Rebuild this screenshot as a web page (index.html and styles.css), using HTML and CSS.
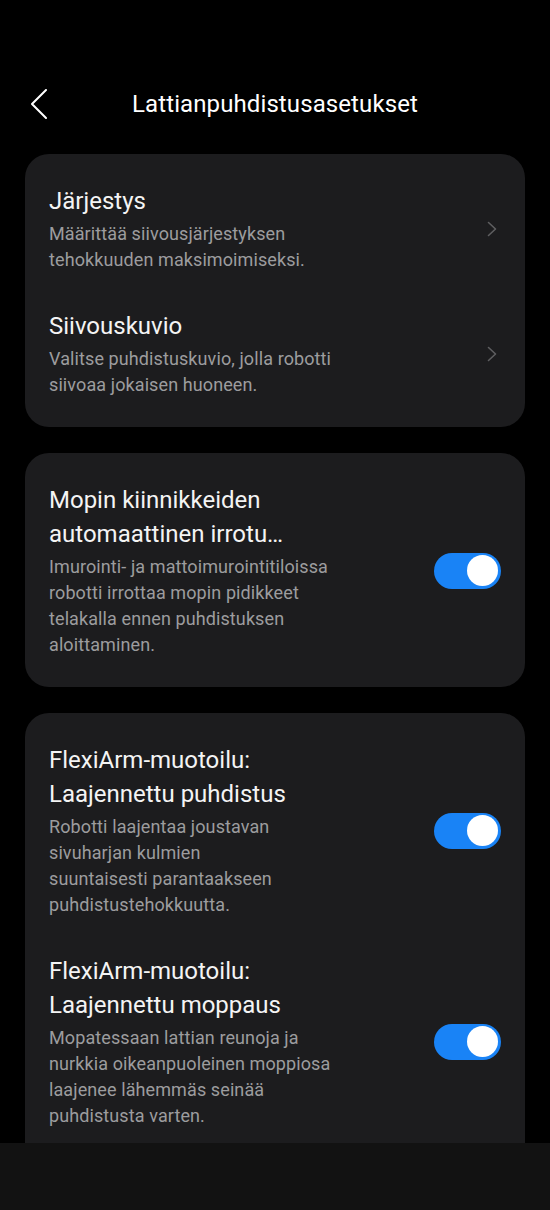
FILE: index.html
```html
<!DOCTYPE html>
<html lang="fi">
<head>
<meta charset="utf-8">
<link rel="stylesheet" href="styles.css">
</head>
<body>
<div class="screen">
  <header class="header">
    <div class="back">
      <svg width="16" height="30" viewBox="0 0 16 30"><polyline points="15,1 1,15 15,29" fill="none" stroke="#ffffff" stroke-width="2" stroke-linecap="round" stroke-linejoin="round"/></svg>
    </div>
    <h1 class="title">Lattianpuhdistusasetukset</h1>
    <div></div>
  </header>

  <main class="cards">
    <section class="card">
      <div class="item">
        <div class="text">
          <div class="item-title">Järjestys</div>
          <div class="item-desc">Määrittää siivousjärjestyksen<br>tehokkuuden maksimoimiseksi.</div>
        </div>
        <svg class="chev" width="10" height="16" viewBox="0 0 10 16"><polyline points="1.5,1.5 8.5,8 1.5,14.5" fill="none" stroke="#5e5e60" stroke-width="1.6" stroke-linecap="round" stroke-linejoin="round"/></svg>
      </div>
      <div class="item">
        <div class="text">
          <div class="item-title">Siivouskuvio</div>
          <div class="item-desc">Valitse puhdistuskuvio, jolla robotti<br>siivoaa jokaisen huoneen.</div>
        </div>
        <svg class="chev" width="10" height="16" viewBox="0 0 10 16"><polyline points="1.5,1.5 8.5,8 1.5,14.5" fill="none" stroke="#5e5e60" stroke-width="1.6" stroke-linecap="round" stroke-linejoin="round"/></svg>
      </div>
    </section>

    <section class="card">
      <div class="item">
        <div class="text">
          <div class="item-title">Mopin kiinnikkeiden<br>automaattinen irrotu…</div>
          <div class="item-desc">Imurointi- ja mattoimurointitiloissa<br>robotti irrottaa mopin pidikkeet<br>telakalla ennen puhdistuksen<br>aloittaminen.</div>
        </div>
        <div class="toggle"><div class="knob"></div></div>
      </div>
    </section>

    <section class="card card-last">
      <div class="item">
        <div class="text">
          <div class="item-title">FlexiArm-muotoilu:<br>Laajennettu puhdistus</div>
          <div class="item-desc">Robotti laajentaa joustavan<br>sivuharjan kulmien<br>suuntaisesti parantaakseen<br>puhdistustehokkuutta.</div>
        </div>
        <div class="toggle"><div class="knob"></div></div>
      </div>
      <div class="item">
        <div class="text">
          <div class="item-title">FlexiArm-muotoilu:<br>Laajennettu moppaus</div>
          <div class="item-desc">Mopatessaan lattian reunoja ja<br>nurkkia oikeanpuoleinen moppiosa<br>laajenee lähemmäs seinää<br>puhdistusta varten.</div>
        </div>
        <div class="toggle"><div class="knob"></div></div>
      </div>
    </section>
  </main>

  <div class="navbar"></div>
</div>
</body>
</html>
```

FILE: styles.css
```css
* { box-sizing: border-box; }
html, body {
  margin: 0;
  padding: 0;
  background: #000000;
}
body {
  font-family: Roboto, "Noto Sans", "Liberation Sans", sans-serif;
  color: #f2f2f2;
}
.screen {
  width: 550px;
  height: 1210px;
  overflow: hidden;
  position: relative;
  background: #000000;
}
.header {
  margin-top: 72px;
  height: 64px;
  display: grid;
  grid-template-columns: 1fr auto 1fr;
  align-items: center;
}
.back {
  padding-left: 31px;
  display: flex;
  align-items: center;
}
.back svg { display: block; }
.title {
  margin: 0;
  font-size: 24px;
  font-weight: 400;
  color: #ffffff;
  letter-spacing: 0.1px;
}
.cards {
  padding: 18px 25px 0;
  display: flex;
  flex-direction: column;
  gap: 26px;
}
.card {
  background: #1c1c1e;
  border-radius: 24px;
  padding: 12px 24px 11px;
}
.card-last {
  padding-bottom: 60px;
}
.item {
  display: flex;
  align-items: center;
  justify-content: space-between;
  padding: 18px 0;
}
.text {
  flex: 1;
  min-width: 0;
}
.item-title {
  font-size: 24px;
  line-height: 34px;
  color: #f4f4f4;
}
.item-desc {
  margin-top: 3px;
  font-size: 18px;
  line-height: 26px;
  color: #9c9c9e;
  letter-spacing: 0.1px;
}
.chev {
  display: block;
  flex: none;
  margin-right: 4px;
}
.toggle {
  flex: none;
  width: 67px;
  height: 36px;
  border-radius: 18px;
  background: #1983f6;
  display: flex;
  align-items: center;
  justify-content: flex-end;
  padding-right: 3px;
}
.knob {
  width: 31px;
  height: 31px;
  border-radius: 50%;
  background: #ffffff;
}
.navbar {
  position: absolute;
  left: 0;
  right: 0;
  bottom: 0;
  height: 67px;
  background: #121212;
}
```
